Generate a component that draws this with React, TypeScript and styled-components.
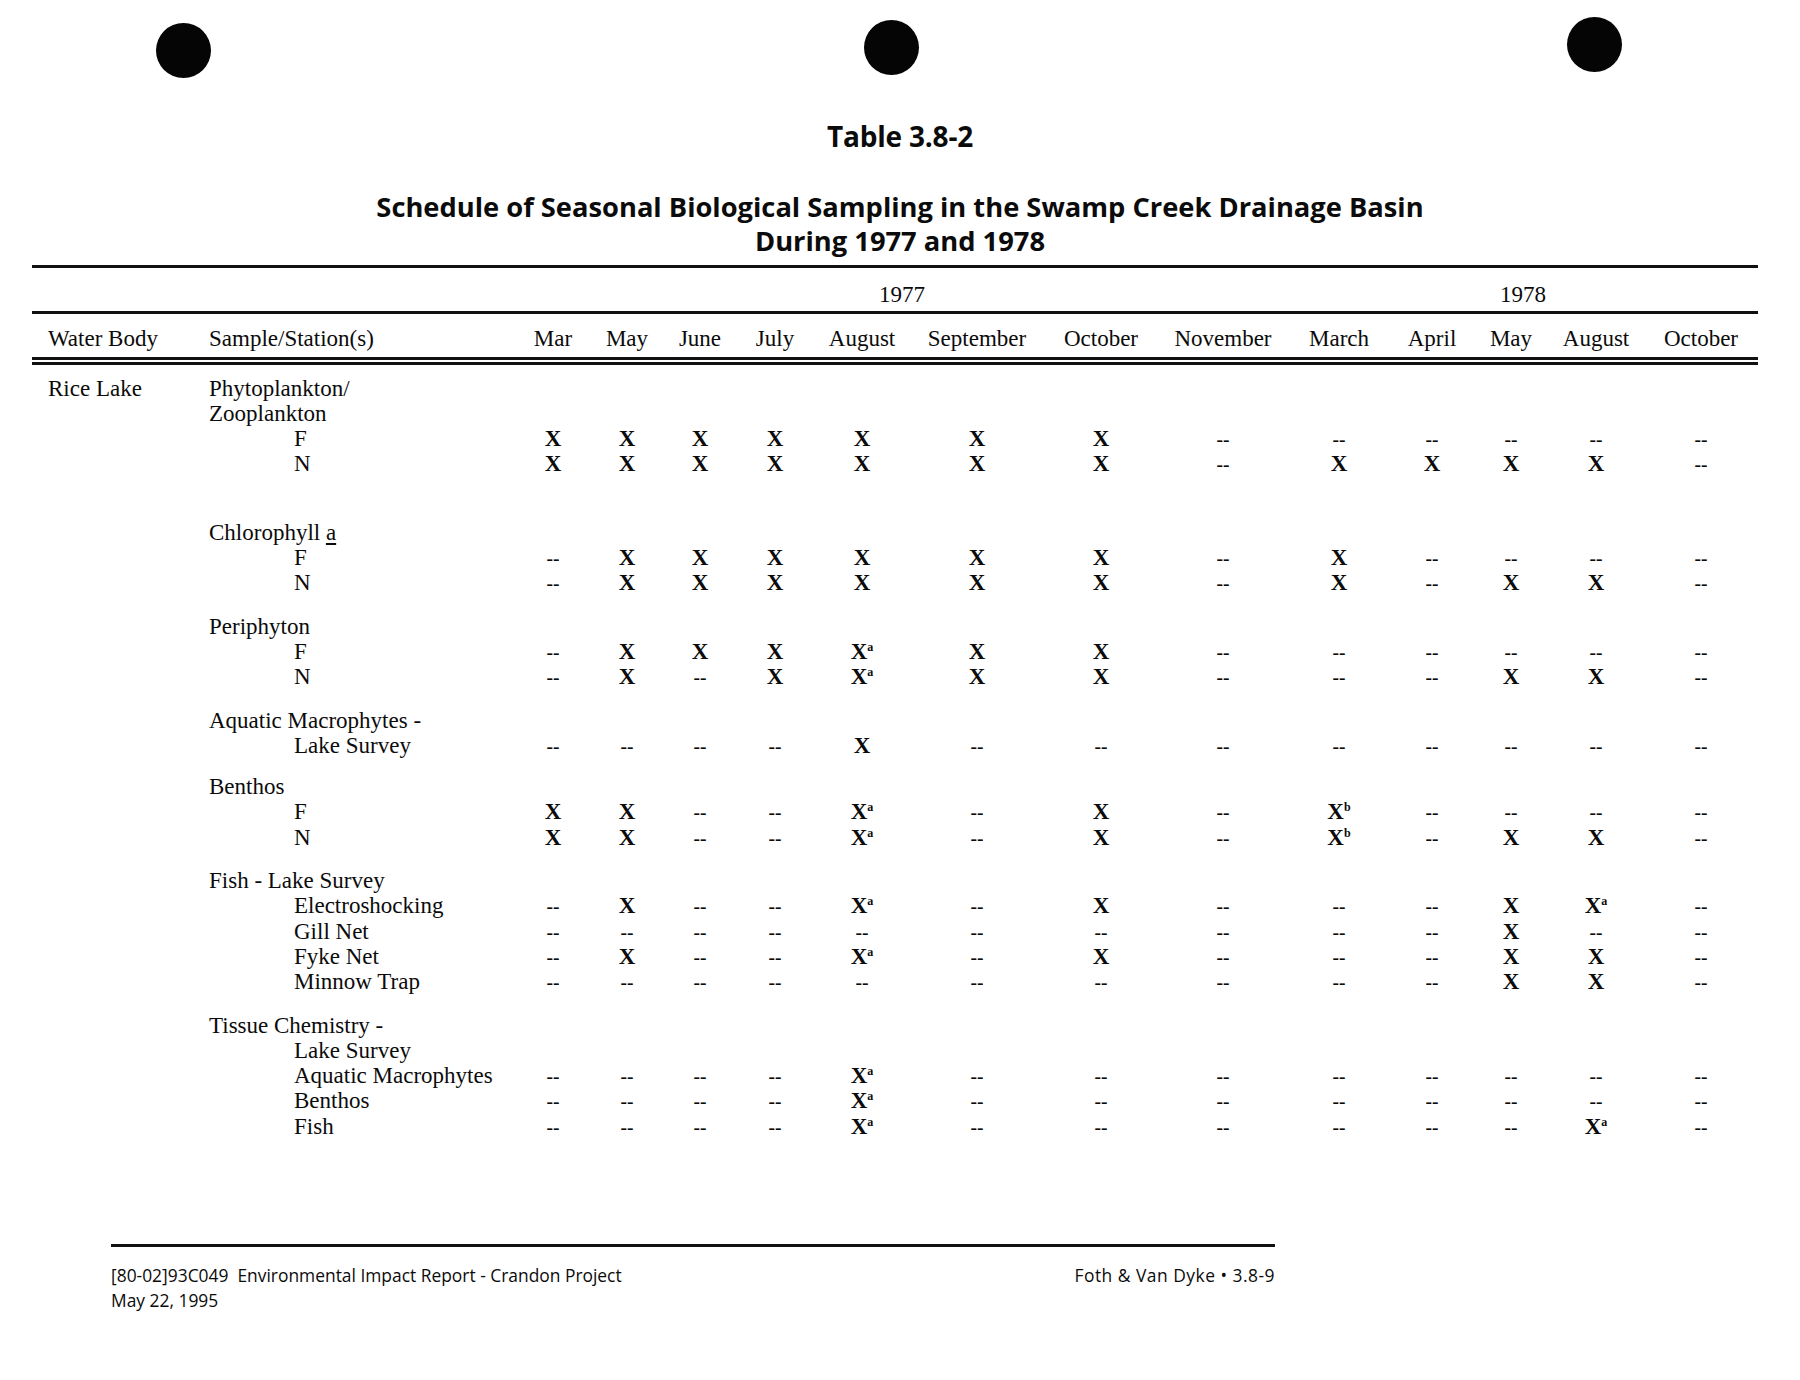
import React from "react";
import styled, { createGlobalStyle } from "styled-components";

const GlobalStyle = createGlobalStyle`
  html, body { margin: 0; padding: 0; background: #ffffff; }
  body { color: #0b0b0b; }
`;

const Page = styled.div`
  width: 1800px;
  height: 1380px;
  box-sizing: border-box;
  padding-top: 17px;
  display: flex;
  flex-direction: column;
  font-family: "Liberation Serif", "Times New Roman", serif;
`;

const HoleRow = styled.div`
  display: flex;
  align-items: flex-start;
  padding-left: 156px;
  height: 62px;
`;

const Hole = styled.div<{ $drop: number; $before: number }>`
  width: 55px;
  height: 55px;
  border-radius: 50%;
  background: #050505;
  margin-top: ${(p) => p.$drop}px;
  margin-left: ${(p) => p.$before}px;
`;

const Title = styled.h1`
  margin: 40px 0 0;
  text-align: center;
  font-family: "Open Sans", "Liberation Sans", sans-serif;
  font-weight: 700;
  font-size: 28px;
  line-height: 34px;
  letter-spacing: -0.2px;
`;

const Subtitle = styled.h2`
  margin: 37px 0 0;
  text-align: center;
  font-family: "Open Sans", "Liberation Sans", sans-serif;
  font-weight: 700;
  font-size: 27.3px;
  line-height: 34px;
  letter-spacing: 0;
`;

const Table = styled.div`
  margin: 7px 0 0 32px;
  width: 1726px;
  font-size: 23px;
  line-height: 25.3px;
`;

const ThickRule = styled.div`
  height: 3px;
  background: #111;
`;

const DoubleRule = styled.div`
  height: 2px;
  border-top: 3px solid #111;
  border-bottom: 3px solid #111;
`;

const COLS =
  "177px 307px 74px 74px 72px 78px 96px 134px 114px 130px 102px 84px 74px 96px 114px";

const Row = styled.div<{ $gap?: number }>`
  display: grid;
  grid-template-columns: ${COLS};
  margin-top: ${(p) => p.$gap ?? 0}px;
`;

const YearRow = styled(Row)`
  padding: 14px 0 4px;
`;

const HeadRow = styled(Row)`
  padding: 12px 0 5px;
`;

const Body = styled.div`
  padding-top: 11px;
`;

const WaterCell = styled.div`
  padding-left: 16px;
  white-space: nowrap;
`;

const SampleCell = styled.div<{ $level: number }>`
  padding-left: ${(p) => p.$level * 85}px;
  white-space: nowrap;
`;

const YearCell = styled.div<{ $start: number; $span: number }>`
  grid-column: ${(p) => p.$start} / span ${(p) => p.$span};
  text-align: center;
`;

const MonthCell = styled.div`
  text-align: center;
  white-space: nowrap;
`;

const MarkCell = styled.div`
  text-align: center;
  white-space: nowrap;
  font-weight: 700;
`;

const Dash = styled.span`
  font-weight: 700;
  font-size: 19.5px;
  line-height: 0;
  letter-spacing: 0;
`;

const Sup = styled.sup`
  font-size: 12px;
  line-height: 0;
  vertical-align: 8px;
  font-weight: 700;
`;

const Under = styled.span`
  text-decoration: underline;
  text-underline-offset: 3px;
`;

const Footer = styled.div`
  margin: 0 0 0 111px;
  width: 1164px;
  font-family: "Open Sans", "Liberation Sans", sans-serif;
  font-size: 17.4px;
  line-height: 25px;
`;

const FooterRule = styled.div`
  height: 3px;
  background: #111;
  margin-bottom: 16px;
`;

const FooterLine = styled.div`
  display: flex;
  justify-content: space-between;
`;

const FooterText = styled.span<{ $track?: number }>`
  letter-spacing: ${(p) => p.$track ?? 0}px;
`;

const Spacer = styled.div`
  flex: 1;
`;

const FooterPad = styled.div`
  height: 67px;
`;

const months = [
  "Mar", "May", "June", "July", "August", "September", "October", "November",
  "March", "April", "May", "August", "October",
];

type RowDef = {
  water?: string;
  label: React.ReactNode;
  level: number;
  marks?: string;
  gap?: number;
};

const rows: RowDef[] = [
  { water: "Rice Lake", label: "Phytoplankton/", level: 0 },
  { label: "Zooplankton", level: 0 },
  { label: "F", level: 1, marks: "X X X X X X X - - - - - -" },
  { label: "N", level: 1, marks: "X X X X X X X - X X X X -" },
  { label: <>Chlorophyll <Under>a</Under></>, level: 0, gap: 43 },
  { label: "F", level: 1, marks: "- X X X X X X - X - - - -" },
  { label: "N", level: 1, marks: "- X X X X X X - X - X X -" },
  { label: "Periphyton", level: 0, gap: 18 },
  { label: "F", level: 1, marks: "- X X X Xa X X - - - - - -" },
  { label: "N", level: 1, marks: "- X - X Xa X X - - - X X -" },
  { label: "Aquatic Macrophytes -", level: 0, gap: 18 },
  { label: "Lake Survey", level: 1, marks: "- - - - X - - - - - - - -" },
  { label: "Benthos", level: 0, gap: 16 },
  { label: "F", level: 1, marks: "X X - - Xa - X - Xb - - - -" },
  { label: "N", level: 1, marks: "X X - - Xa - X - Xb - X X -" },
  { label: "Fish - Lake Survey", level: 0, gap: 18 },
  { label: "Electroshocking", level: 1, marks: "- X - - Xa - X - - - X Xa -" },
  { label: "Gill Net", level: 1, marks: "- - - - - - - - - - X - -" },
  { label: "Fyke Net", level: 1, marks: "- X - - Xa - X - - - X X -" },
  { label: "Minnow Trap", level: 1, marks: "- - - - - - - - - - X X -" },
  { label: "Tissue Chemistry -", level: 0, gap: 18 },
  { label: "Lake Survey", level: 1 },
  { label: "Aquatic Macrophytes", level: 1, marks: "- - - - Xa - - - - - - - -" },
  { label: "Benthos", level: 1, marks: "- - - - Xa - - - - - - - -" },
  { label: "Fish", level: 1, marks: "- - - - Xa - - - - - - Xa -" },
];

function Mark({ token }: { token: string }) {
  if (token === "-") return <Dash>--</Dash>;
  if (token === "Xa") return <>X<Sup>a</Sup></>;
  if (token === "Xb") return <>X<Sup>b</Sup></>;
  return <>X</>;
}

export default function App() {
  return (
    <>
      <GlobalStyle />
      <Page>
        <HoleRow>
          <Hole $drop={6} $before={0} />
          <Hole $drop={3} $before={653} />
          <Hole $drop={0} $before={648} />
        </HoleRow>
        <Title>Table 3.8-2</Title>
        <Subtitle>
          Schedule of Seasonal Biological Sampling in the Swamp Creek Drainage Basin
          <br />
          During 1977 and 1978
        </Subtitle>
        <Table>
          <ThickRule />
          <YearRow>
            <YearCell $start={3} $span={8}>1977</YearCell>
            <YearCell $start={11} $span={5}>1978</YearCell>
          </YearRow>
          <ThickRule />
          <HeadRow>
            <WaterCell>Water Body</WaterCell>
            <SampleCell $level={0}>Sample/Station(s)</SampleCell>
            {months.map((m, i) => (
              <MonthCell key={i}>{m}</MonthCell>
            ))}
          </HeadRow>
          <DoubleRule />
          <Body>
            {rows.map((r, i) => (
              <Row key={i} $gap={r.gap}>
                <WaterCell>{r.water ?? ""}</WaterCell>
                <SampleCell $level={r.level}>{r.label}</SampleCell>
                {r.marks
                  ? r.marks.split(" ").map((t, j) => (
                      <MarkCell key={j}>
                        <Mark token={t} />
                      </MarkCell>
                    ))
                  : null}
              </Row>
            ))}
          </Body>
        </Table>
        <Spacer />
        <Footer>
          <FooterRule />
          <FooterLine>
            <FooterText>[80-02]93C049&nbsp; Environmental Impact Report - Crandon Project</FooterText>
            <FooterText $track={0.5}>Foth &amp; Van Dyke • 3.8-9</FooterText>
          </FooterLine>
          <div>May 22, 1995</div>
        </Footer>
        <FooterPad />
      </Page>
    </>
  );
}
